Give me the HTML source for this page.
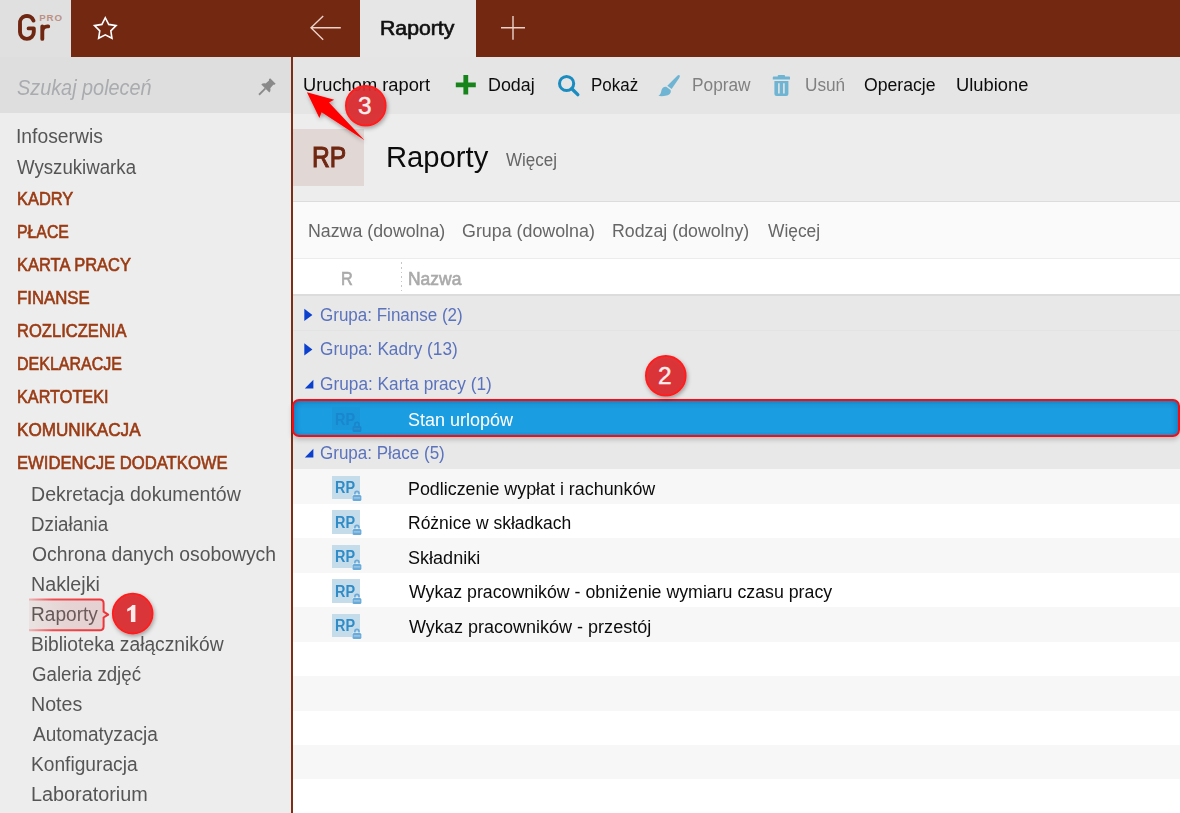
<!DOCTYPE html>
<html><head><meta charset="utf-8"><title>Raporty</title>
<style>
html,body{margin:0;padding:0;}
body{width:1180px;height:813px;position:relative;overflow:hidden;background:#ededed;font-family:"Liberation Sans",sans-serif;}
.b{position:absolute;}
.t,.n{position:absolute;white-space:nowrap;transform-origin:0 50%;line-height:normal;}
.ic{position:absolute;left:331.6px;width:28.3px;height:23.7px;transform:translateY(0.01px);background:#c5dcea;}
.ic b{position:absolute;left:3.3px;top:3.9px;font-size:16px;line-height:normal;font-weight:700;color:#2f8cc7;transform-origin:0 50%;transform:scaleX(.9);}
.ic svg{left:0;top:0;}
.ic .lb{fill:#6aaad9;stroke:rgba(255,255,255,.85);stroke-width:.9;paint-order:stroke;}
.ic .ls{fill:none;stroke:#6aaad9;stroke-width:1.6;}
.ic .ll{stroke:rgba(255,255,255,.5);stroke-width:1;}
.ic.sel{background:#1a96da;}
.ic.sel .lb{fill:#1986cd;stroke:none;}
.ic.sel .ls{stroke:#1986cd;}
.ic.sel .ll{stroke:rgba(255,255,255,.1);}
.ic.sel b{color:#1986cd;}
svg{position:absolute;overflow:visible;}
</style></head>
<body>
<!-- header -->
<div class="b" style="left:0;top:0;width:1180px;height:57px;background:#732812"></div>
<div class="b" style="left:0;top:0;width:71px;height:57px;background:#e0e0e0"></div>
<div class="b" style="left:360px;top:0;width:116px;height:57px;background:#e6e6e6"></div>
<!-- sidebar -->
<div class="b" style="left:0;top:57px;width:291px;height:56px;background:#dedede"></div>
<div class="b" style="left:0;top:113px;width:291px;height:700px;background:#ededed"></div>
<div class="b" style="left:291px;top:57px;width:2px;height:756px;background:#7d2e16"></div>
<!-- toolbar -->
<div class="b" style="left:293px;top:57px;width:887px;height:57px;background:#e5e5e5"></div>
<!-- title area -->
<div class="b" style="left:293px;top:114px;width:887px;height:87px;background:#ededed"></div>
<div class="b" style="left:293px;top:129px;width:71px;height:57px;background:#e1d8d6"></div>
<!-- filter row -->
<div class="b" style="left:293px;top:201px;width:887px;height:57px;background:#fafafa;border-top:1px solid #dcdcdc;box-sizing:border-box"></div>
<!-- column header -->
<div class="b" style="left:293px;top:258px;width:887px;height:36px;background:#fff;border-top:1px solid #ececec;box-sizing:border-box"></div>
<div class="b" style="left:401px;top:259.5px;width:1px;height:32px;background:repeating-linear-gradient(to bottom,transparent 0,transparent 2.4px,#c6c6c6 2.4px,#c6c6c6 4px,transparent 4px,transparent 4.55px)"></div>
<!-- rows -->
<div class="b" style="left:293px;top:294px;width:887px;height:519px;background:#fff"></div>
<div class="b" style="left:293px;top:294px;width:887px;height:175px;background:#e8e8e8;border-top:2px solid #dcdcdc;box-sizing:border-box"></div>
<div class="b" style="left:293px;top:330px;width:887px;height:1px;background:#e3e3e3"></div>
<div class="b" style="left:293px;top:469px;width:887px;height:35px;background:#f7f7f7"></div>
<div class="b" style="left:293px;top:538px;width:887px;height:35px;background:#f7f7f7"></div>
<div class="b" style="left:293px;top:607px;width:887px;height:35px;background:#f7f7f7"></div>
<div class="b" style="left:293px;top:676px;width:887px;height:35px;background:#f7f7f7"></div>
<div class="b" style="left:293px;top:745px;width:887px;height:34px;background:#f7f7f7"></div>
<!-- selected row -->
<div class="b" style="left:291.7px;top:399px;width:888.4px;height:37.7px;background:linear-gradient(#1a8fd0 0,#1b9de2 24%,#1b9de2 100%);border:2.5px solid #f80c14;border-radius:7px;box-sizing:border-box;box-shadow:0 3px 5px rgba(0,0,0,.18), inset 4px 0 5px -2px rgba(0,40,90,.25), inset -4px 0 5px -2px rgba(0,40,90,.25)"></div>
<!-- row icons -->
<div class="ic sel" style="top:406.7px"><b>RP</b><svg width="32" height="27" viewBox="0 0 32 27"><path class="ls" d="M22.9 19.2 V17.4 A2.05 2.05 0 0 1 27 17.4 V19.2"/><rect class="lb" x="20.5" y="18.9" width="8.9" height="6.1" rx="1.5"/><path class="ll" d="M21.7 21.9 H28.2"/></svg></div>
<div class="ic" style="top:475.6px"><b>RP</b><svg width="32" height="27" viewBox="0 0 32 27"><path class="ls" d="M22.9 19.2 V17.4 A2.05 2.05 0 0 1 27 17.4 V19.2"/><rect class="lb" x="20.5" y="18.9" width="8.9" height="6.1" rx="1.5"/><path class="ll" d="M21.7 21.9 H28.2"/></svg></div>
<div class="ic" style="top:510.1px"><b>RP</b><svg width="32" height="27" viewBox="0 0 32 27"><path class="ls" d="M22.9 19.2 V17.4 A2.05 2.05 0 0 1 27 17.4 V19.2"/><rect class="lb" x="20.5" y="18.9" width="8.9" height="6.1" rx="1.5"/><path class="ll" d="M21.7 21.9 H28.2"/></svg></div>
<div class="ic" style="top:544.6px"><b>RP</b><svg width="32" height="27" viewBox="0 0 32 27"><path class="ls" d="M22.9 19.2 V17.4 A2.05 2.05 0 0 1 27 17.4 V19.2"/><rect class="lb" x="20.5" y="18.9" width="8.9" height="6.1" rx="1.5"/><path class="ll" d="M21.7 21.9 H28.2"/></svg></div>
<div class="ic" style="top:579.1px"><b>RP</b><svg width="32" height="27" viewBox="0 0 32 27"><path class="ls" d="M22.9 19.2 V17.4 A2.05 2.05 0 0 1 27 17.4 V19.2"/><rect class="lb" x="20.5" y="18.9" width="8.9" height="6.1" rx="1.5"/><path class="ll" d="M21.7 21.9 H28.2"/></svg></div>
<div class="ic" style="top:613.6px"><b>RP</b><svg width="32" height="27" viewBox="0 0 32 27"><path class="ls" d="M22.9 19.2 V17.4 A2.05 2.05 0 0 1 27 17.4 V19.2"/><rect class="lb" x="20.5" y="18.9" width="8.9" height="6.1" rx="1.5"/><path class="ll" d="M21.7 21.9 H28.2"/></svg></div>

<!-- texts -->
<span class="t" id="t0" style="left:16.37px;top:124.60px;font-size:20px;font-weight:400;color:#555555;font-style:normal;transform:scaleX(0.9642);">Infoserwis</span>
<span class="t" id="t1" style="left:17.02px;top:155.60px;font-size:20px;font-weight:400;color:#555555;font-style:normal;transform:scaleX(0.9325);">Wyszukiwarka</span>
<span class="t" id="t2" style="left:17.19px;top:188.86px;font-size:17.5px;font-weight:400;color:#9a3b14;font-style:normal;transform:scaleX(0.9385);-webkit-text-stroke:0.62px #9a3b14;">KADRY</span>
<span class="t" id="t3" style="left:17.17px;top:221.86px;font-size:17.5px;font-weight:400;color:#9a3b14;font-style:normal;transform:scaleX(0.9039);-webkit-text-stroke:0.62px #9a3b14;">PŁACE</span>
<span class="t" id="t4" style="left:17.13px;top:254.86px;font-size:17.5px;font-weight:400;color:#9a3b14;font-style:normal;transform:scaleX(0.9425);-webkit-text-stroke:0.62px #9a3b14;">KARTA PRACY</span>
<span class="t" id="t5" style="left:17.16px;top:287.86px;font-size:17.5px;font-weight:400;color:#9a3b14;font-style:normal;transform:scaleX(0.9587);-webkit-text-stroke:0.62px #9a3b14;">FINANSE</span>
<span class="t" id="t6" style="left:17.13px;top:320.86px;font-size:17.5px;font-weight:400;color:#9a3b14;font-style:normal;transform:scaleX(0.9462);-webkit-text-stroke:0.62px #9a3b14;">ROZLICZENIA</span>
<span class="t" id="t7" style="left:17.23px;top:353.86px;font-size:17.5px;font-weight:400;color:#9a3b14;font-style:normal;transform:scaleX(0.9146);-webkit-text-stroke:0.62px #9a3b14;">DEKLARACJE</span>
<span class="t" id="t8" style="left:17.17px;top:386.86px;font-size:17.5px;font-weight:400;color:#9a3b14;font-style:normal;transform:scaleX(0.9285);-webkit-text-stroke:0.62px #9a3b14;">KARTOTEKI</span>
<span class="t" id="t9" style="left:17.10px;top:419.86px;font-size:17.5px;font-weight:400;color:#9a3b14;font-style:normal;transform:scaleX(0.9775);-webkit-text-stroke:0.62px #9a3b14;">KOMUNIKACJA</span>
<span class="t" id="t10" style="left:17.13px;top:452.86px;font-size:17.5px;font-weight:400;color:#9a3b14;font-style:normal;transform:scaleX(0.9519);-webkit-text-stroke:0.62px #9a3b14;">EWIDENCJE DODATKOWE</span>
<span class="t" id="t11" style="left:31.41px;top:482.90px;font-size:20px;font-weight:400;color:#555555;font-style:normal;transform:scaleX(0.9780);">Dekretacja dokumentów</span>
<span class="t" id="t12" style="left:31.36px;top:512.90px;font-size:20px;font-weight:400;color:#555555;font-style:normal;transform:scaleX(0.9384);">Działania</span>
<span class="t" id="t13" style="left:31.97px;top:542.90px;font-size:20px;font-weight:400;color:#555555;font-style:normal;transform:scaleX(0.9670);">Ochrona danych osobowych</span>
<span class="t" id="t14" style="left:31.41px;top:572.90px;font-size:20px;font-weight:400;color:#555555;font-style:normal;transform:scaleX(0.9834);">Naklejki</span>
<span class="t" id="t15" style="left:31.25px;top:602.90px;font-size:20px;font-weight:400;color:#555555;font-style:normal;transform:scaleX(0.9544);">Raporty</span>
<span class="t" id="t16" style="left:31.18px;top:632.90px;font-size:20px;font-weight:400;color:#555555;font-style:normal;transform:scaleX(0.9624);">Biblioteka załączników</span>
<span class="t" id="t17" style="left:32.01px;top:662.90px;font-size:20px;font-weight:400;color:#555555;font-style:normal;transform:scaleX(0.9336);">Galeria zdjęć</span>
<span class="t" id="t18" style="left:31.41px;top:692.90px;font-size:20px;font-weight:400;color:#555555;font-style:normal;transform:scaleX(0.9816);">Notes</span>
<span class="t" id="t19" style="left:33.04px;top:722.90px;font-size:20px;font-weight:400;color:#555555;font-style:normal;transform:scaleX(0.9513);">Automatyzacja</span>
<span class="t" id="t20" style="left:31.21px;top:752.90px;font-size:20px;font-weight:400;color:#555555;font-style:normal;transform:scaleX(0.9583);">Konfiguracja</span>
<span class="t" id="t21" style="left:31.39px;top:782.90px;font-size:20px;font-weight:400;color:#555555;font-style:normal;transform:scaleX(0.9912);">Laboratorium</span>
<span class="t" id="t22" style="left:17.14px;top:75.09px;font-size:22px;font-weight:400;color:#a9abae;font-style:italic;transform:scaleX(0.9019);">Szukaj poleceń</span>
<span class="t" id="t23" style="left:380.24px;top:16.70px;font-size:20px;font-weight:400;color:#111;font-style:normal;transform:scaleX(1.0612);-webkit-text-stroke:0.65px #111;">Raporty</span>
<span class="t" id="t24" style="left:303.24px;top:74.04px;font-size:18.3px;font-weight:400;color:#0c0c0c;font-style:normal;transform:scaleX(0.9997);">Uruchom raport</span>
<span class="t" id="t25" style="left:488.39px;top:74.04px;font-size:18.3px;font-weight:400;color:#0c0c0c;font-style:normal;transform:scaleX(0.9773);">Dodaj</span>
<span class="t" id="t26" style="left:590.91px;top:74.04px;font-size:18.3px;font-weight:400;color:#0c0c0c;font-style:normal;transform:scaleX(0.9271);">Pokaż</span>
<span class="t" id="t27" style="left:692.14px;top:74.04px;font-size:18.3px;font-weight:400;color:#808080;font-style:normal;transform:scaleX(0.9454);">Popraw</span>
<span class="t" id="t28" style="left:804.75px;top:74.04px;font-size:18.3px;font-weight:400;color:#808080;font-style:normal;transform:scaleX(0.9415);">Usuń</span>
<span class="t" id="t29" style="left:864.10px;top:74.04px;font-size:18.3px;font-weight:400;color:#0c0c0c;font-style:normal;transform:scaleX(0.9647);">Operacje</span>
<span class="t" id="t30" style="left:955.59px;top:74.04px;font-size:18.3px;font-weight:400;color:#0c0c0c;font-style:normal;transform:scaleX(1.0022);">Ulubione</span>
<span class="t" id="t31" style="left:312.08px;top:139.65px;font-size:30px;font-weight:400;color:#702711;font-style:normal;transform:scaleX(0.8210);-webkit-text-stroke:1.1px #702711;">RP</span>
<span class="t" id="t32" style="left:385.86px;top:139.65px;font-size:30px;font-weight:400;color:#0c0c0c;font-style:normal;transform:scaleX(0.9734);">Raporty</span>
<span class="t" id="t33" style="left:505.57px;top:148.54px;font-size:18.3px;font-weight:400;color:#666;font-style:normal;transform:scaleX(0.9285);">Więcej</span>
<span class="t" id="t34" style="left:308.00px;top:220.24px;font-size:18.3px;font-weight:400;color:#666;font-style:normal;transform:scaleX(0.9715);">Nazwa (dowolna)</span>
<span class="t" id="t35" style="left:462.44px;top:220.24px;font-size:18.3px;font-weight:400;color:#666;font-style:normal;transform:scaleX(0.9758);">Grupa (dowolna)</span>
<span class="t" id="t36" style="left:612.00px;top:220.24px;font-size:18.3px;font-weight:400;color:#666;font-style:normal;transform:scaleX(0.9715);">Rodzaj (dowolny)</span>
<span class="t" id="t37" style="left:767.96px;top:220.24px;font-size:18.3px;font-weight:400;color:#666;font-style:normal;transform:scaleX(0.9503);">Więcej</span>
<span class="t" id="t38" style="left:340.71px;top:268.66px;font-size:17.5px;font-weight:400;color:#aaa;font-style:normal;transform:scaleX(0.9314);-webkit-text-stroke:0.6px #aaa;">R</span>
<span class="t" id="t39" style="left:407.80px;top:268.66px;font-size:17.5px;font-weight:400;color:#aaa;font-style:normal;transform:scaleX(0.9973);-webkit-text-stroke:0.6px #aaa;">Nazwa</span>
<span class="t" id="t40" style="left:320.28px;top:303.94px;font-size:18.3px;font-weight:400;color:#5b73bd;font-style:normal;transform:scaleX(0.9302);">Grupa: Finanse (2)</span>
<span class="t" id="t41" style="left:319.87px;top:337.94px;font-size:18.3px;font-weight:400;color:#5b73bd;font-style:normal;transform:scaleX(0.9412);">Grupa: Kadry (13)</span>
<span class="t" id="t42" style="left:320.27px;top:372.54px;font-size:18.3px;font-weight:400;color:#5b73bd;font-style:normal;transform:scaleX(0.9444);">Grupa: Karta pracy (1)</span>
<span class="t" id="t43" style="left:408.31px;top:408.94px;font-size:18.3px;font-weight:400;color:#fff;font-style:normal;transform:scaleX(0.9834);">Stan urlopów</span>
<span class="t" id="t44" style="left:320.08px;top:441.94px;font-size:18.3px;font-weight:400;color:#5b73bd;font-style:normal;transform:scaleX(0.9303);">Grupa: Płace (5)</span>
<span class="t" id="t45" style="left:407.99px;top:477.94px;font-size:18.3px;font-weight:400;color:#0c0c0c;font-style:normal;transform:scaleX(0.9773);">Podliczenie wypłat i rachunków</span>
<span class="t" id="t46" style="left:407.75px;top:511.94px;font-size:18.3px;font-weight:400;color:#0c0c0c;font-style:normal;transform:scaleX(0.9563);">Różnice w składkach</span>
<span class="t" id="t47" style="left:408.09px;top:546.94px;font-size:18.3px;font-weight:400;color:#0c0c0c;font-style:normal;transform:scaleX(0.9876);">Składniki</span>
<span class="t" id="t48" style="left:408.96px;top:580.94px;font-size:18.3px;font-weight:400;color:#0c0c0c;font-style:normal;transform:scaleX(0.9712);">Wykaz pracowników - obniżenie wymiaru czasu pracy</span>
<span class="t" id="t49" style="left:408.96px;top:615.94px;font-size:18.3px;font-weight:400;color:#0c0c0c;font-style:normal;transform:scaleX(0.9858);">Wykaz pracowników - przestój</span>
<!-- icons -->
<svg width="1180" height="813" viewBox="0 0 1180 813" style="left:0;top:0">
<defs>
<filter id="sh" x="-30%" y="-30%" width="160%" height="160%"><feDropShadow dx="1" dy="2" stdDeviation="2.2" flood-color="#000" flood-opacity="0.35"/></filter>
<linearGradient id="fade" x1="0" x2="1" y1="0" y2="0"><stop offset="0" stop-color="#f03c40" stop-opacity="0.3"/><stop offset="0.3" stop-color="#f03c40" stop-opacity="0.9"/><stop offset="1" stop-color="#ee3338" stop-opacity="1"/></linearGradient>
<linearGradient id="fadef" x1="0" x2="1" y1="0" y2="0"><stop offset="0" stop-color="#c86a6a" stop-opacity="0.08"/><stop offset="0.5" stop-color="#c86a6a" stop-opacity="0.2"/><stop offset="1" stop-color="#c86a6a" stop-opacity="0.22"/></linearGradient>
</defs>
<!-- logo Gr -->
<g fill="none" stroke="#702711" stroke-width="3.9" stroke-linecap="round" stroke-linejoin="round">
<path d="M33.5 20.6 A7 7 0 0 0 20 24 V31.9 A6.9 7 0 0 0 33.8 31.9 V28.4 H28.6"/>
<path d="M42.3 26.4 V38.9 M42.3 31.8 C42.3 27.6 44.6 26.2 48.2 26.4"/>
</g>
<!-- star -->
<path fill="none" stroke="#fff" stroke-width="1.6" stroke-linejoin="miter" d="M105.30 17.74L108.71 24.41L116.10 25.59L110.82 30.89L111.98 38.29L105.30 34.90L98.62 38.29L99.78 30.89L94.50 25.59L101.89 24.41Z"/>
<!-- back arrow -->
<g fill="none" stroke="#ecd2c8" stroke-width="1.4">
<path d="M340.8 27.8 H311 M323.2 15.9 L311 27.8 L323.2 39.7"/>
<path d="M501 27.8 H525 M513 15.9 V39.7"/>
</g>
<!-- pin -->
<g transform="translate(272.9,80.9) rotate(45)" fill="#8a8a8a">
<path d="M-3.9 0 H3.9 V1.7 L3 2.5 L3.3 7 C4.9 7.9 5.7 9.2 5.7 10.7 H-5.7 C-5.7 9.2 -4.9 7.9 -3.3 7 L-3 2.5 L-3.9 1.7 Z"/>
<rect x="-0.9" y="10.6" width="1.8" height="9"/>
</g>
<!-- green plus -->
<path fill="#17831b" d="M463.4 75 h4.8 v7.4 h7.6 v4.8 h-7.6 v7.4 h-4.8 v-7.4 h-7.6 v-4.8 h7.6 z"/>
<!-- search -->
<g fill="none" stroke="#1b8cc0">
<circle cx="566.6" cy="83.5" r="7.1" stroke-width="3"/>
<path d="M571.8 88.8 L577.8 94.6" stroke-width="3.4" stroke-linecap="round"/>
</g>
<!-- brush -->
<g fill="#6fb5d3">
<path d="M679.4 75.2 C680.2 75.6 679.8 77 679 78.3 L671.6 89 L667.3 85.8 L676.6 76.5 C677.7 75.5 678.7 74.9 679.4 75.2 Z"/>
<path d="M666.3 86.8 L670.6 90 C671.4 92.6 669.8 95 666.6 95.6 C663.6 96.2 660.6 96.4 658.4 95.8 C660.6 94.6 661 92.8 661.4 90.6 C661.9 88 664 86.4 666.3 86.8 Z"/>
</g>
<!-- trash -->
<g fill="#6fb5d3">
<path d="M777.8 76.6 V75.8 Q777.8 75 778.6 75 H784.2 Q785 75 785 75.8 V76.6 H789.2 Q790 76.6 790 77.4 V79.6 H772.8 V77.4 Q772.8 76.6 773.6 76.6 Z"/>
<path d="M774.4 81 H788.4 V94 Q788.4 96.1 786.3 96.1 H776.5 Q774.4 96.1 774.4 94 Z M778.1 83.2 V93.4 H779.7 V83.2 Z M783.1 83.2 V93.4 H784.7 V83.2 Z" fill-rule="evenodd"/>
</g>
<!-- group triangles -->
<g fill="#0b40cf">
<path d="M304.3 308.8 L312.4 314.9 L304.3 320.9 Z"/>
<path d="M304.3 343.3 L312.4 349.4 L304.3 355.5 Z"/>
<path d="M313.4 379.8 V388.4 H304.8 Z"/>
<path d="M313.4 448.8 V457.4 H304.8 Z"/>
</g>
<!-- annotations -->
<g filter="url(#sh)">
<path d="M306.9 92.2 L334.2 99.7 L329 102.5 L364.5 140.3 L321.6 112.3 L319.4 117.9 Z" fill="#ff0000"/>
</g>
<g filter="url(#sh)">
<circle cx="365.8" cy="105.7" r="19.8" fill="#dc2d31" fill-opacity="0.93" stroke="#ff1f1f" stroke-width="2"/>
<circle cx="665.8" cy="375.7" r="19.8" fill="#dc2d31" fill-opacity="0.93" stroke="#ff1f1f" stroke-width="2"/>
<circle cx="132.7" cy="613.6" r="19.8" fill="#dc2d31" fill-opacity="0.93" stroke="#ff1f1f" stroke-width="2"/>
</g>
<path fill="#fdeaea" d="M135.4 605.1 V622.1 H130.9 V609.7 C129.8 610.4 128.6 611 127.2 611.4 V608.9 C129.2 608.1 131 606.9 132.3 605.1 Z"/>
<!-- raporty callout -->
<path d="M29 599.4 H99.8 Q103.6 599.4 103.6 603.2 V611.7 L108.2 614.6 L103.6 617.5 V626.4 Q103.6 630.2 99.8 630.2 H29" fill="url(#fadef)" stroke="url(#fade)" stroke-width="2" stroke-linejoin="round"/>
</svg>
<span class="n" style="left:358.0px;top:91.6px;font-size:24.5px;font-weight:400;color:#fdeeee;-webkit-text-stroke:0.45px #fdeeee;width:13.6px;text-align:center">3</span>
<span class="n" style="left:658.1px;top:362.0px;font-size:24.5px;font-weight:400;color:#fdeeee;-webkit-text-stroke:0.45px #fdeeee;width:13.6px;text-align:center">2</span>
<span class="n" style="left:39.2px;top:12.1px;font-size:9.7px;font-weight:700;color:#bd9084;letter-spacing:0.95px">PRO</span>

</body></html>
